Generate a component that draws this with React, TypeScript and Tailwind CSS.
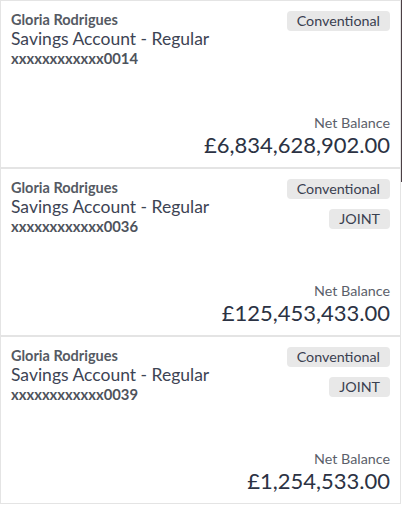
type Account = { name: string; product: string; number: string; joint: boolean; balance: string };

const accounts: Account[] = [
  { name: "Gloria Rodrigues", product: "Savings Account - Regular", number: "xxxxxxxxxxxx0014", joint: false, balance: "£6,834,628,902.00" },
  { name: "Gloria Rodrigues", product: "Savings Account - Regular", number: "xxxxxxxxxxxx0036", joint: true, balance: "£125,453,433.00" },
  { name: "Gloria Rodrigues", product: "Savings Account - Regular", number: "xxxxxxxxxxxx0039", joint: true, balance: "£1,254,533.00" },
];

function Badge({ label }: { label: string }) {
  return (
    <span className="rounded-[4px] bg-[#e8e8e8] px-[10px] h-[20px] flex items-center text-[14.3px] text-[#3a4050]">
      {label}
    </span>
  );
}

function AccountCard({ account }: { account: Account }) {
  return (
    <div className="h-[168px] border border-[#e4e4e4] bg-white flex flex-col px-[10px] pt-[9px] pb-[9px]">
      <div className="flex justify-between">
        <div className="flex flex-col">
          <p className="text-[14.5px] leading-[20px] font-bold text-[#555a63]">{account.name}</p>
          <p className="text-[17.5px] leading-[18px] text-[#3d4454]">{account.product}</p>
          <p className="text-[14.8px] leading-[20px] font-bold text-[#4e535c]">{account.number}</p>
        </div>
        <div className="flex flex-col items-end gap-[10px] pt-[1px]">
          <Badge label="Conventional" />
          {account.joint && <Badge label="JOINT" />}
        </div>
      </div>
      <div className="mt-auto flex flex-col items-end">
        <p className="text-[14.3px] leading-[18px] text-[#5b5f6b]">Net Balance</p>
        <p className="text-[22px] leading-[26px] text-[#2b3243]">{account.balance}</p>
      </div>
    </div>
  );
}

export default function App() {
  return (
    <div className="relative w-[402px] bg-white font-['Lato',sans-serif]">
      <div className="w-[401px]">
        {accounts.map((a) => (
          <AccountCard key={a.number} account={a} />
        ))}
      </div>
      <div className="absolute right-0 top-0 w-px h-[182px] bg-[#4b3f45]" />
    </div>
  );
}
